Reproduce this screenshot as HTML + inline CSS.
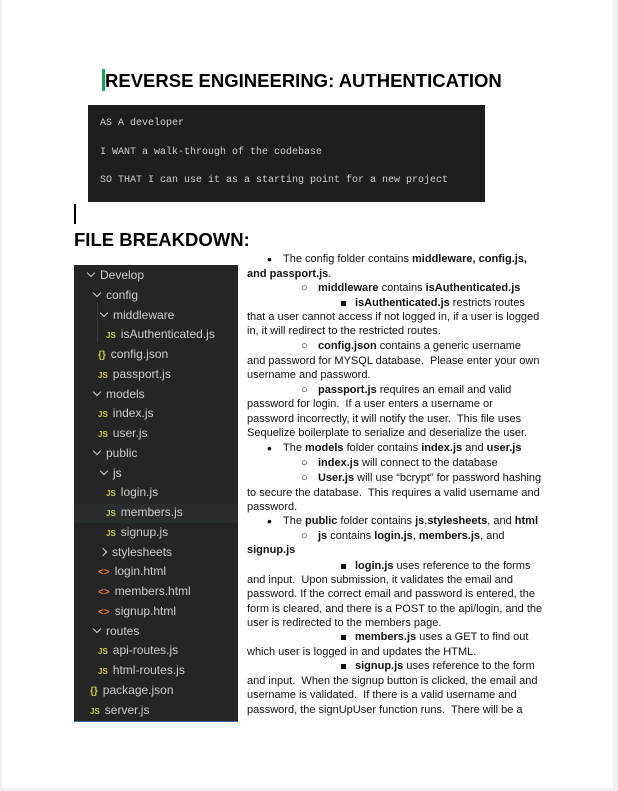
<!DOCTYPE html>
<html><head><meta charset="utf-8"><style>
html,body{margin:0;padding:0;}
body{width:618px;height:791px;background:#eef0f2;position:relative;overflow:hidden;font-family:"Liberation Sans",Arial,sans-serif;}
.page{position:absolute;left:2px;top:0;width:611px;height:788px;background:#fff;}
.a{position:absolute;white-space:nowrap;}
.t{font-size:11px;color:#111;line-height:14px;}
.h{font-size:19px;font-weight:bold;color:#000;}
.code{position:absolute;left:88px;top:105px;width:397px;height:97px;background:#1e1e1e;}
.code div{position:absolute;left:12px;font-family:"Liberation Mono",monospace;font-size:10px;color:#cfcfcf;}
.tree{position:absolute;left:74px;top:265px;width:164px;height:457px;background:#252526;}
.ti{position:absolute;font-size:12px;color:#cccccc;white-space:nowrap;line-height:16px;}
.js{color:#cbcb41;font-weight:bold;font-size:8px;margin-right:5px;}
.br{color:#cbcb41;font-weight:bold;font-size:10px;margin-right:5px;}
.ht{color:#e37933;font-weight:bold;font-size:10px;margin-right:5px;}
.ch{display:inline-block;width:5px;height:5px;border-right:1.2px solid #ccc;border-bottom:1.2px solid #ccc;transform:rotate(45deg);margin:0 6px 3px 1px;}
.cr{display:inline-block;width:5px;height:5px;border-right:1.2px solid #ccc;border-bottom:1.2px solid #ccc;transform:rotate(-45deg);margin:0 6px 1px 0;}
b{font-weight:bold;}
.sq{display:inline-block;width:5px;height:5px;background:#111;}
.bu{font-size:14px;line-height:14px;}
</style></head><body>
<div class="page"></div>
<div class="a" style="left:102px;top:69px;width:3px;height:22px;background:#1a9c5a;"></div>
<div class="a h" style="left:105px;top:70px;font-size:18.5px;">REVERSE ENGINEERING: AUTHENTICATION</div>
<div class="code">
<div style="top:13px">AS A developer</div>
<div style="top:42px">I WANT a walk-through of the codebase</div>
<div style="top:70px">SO THAT I can use it as a starting point for a new project</div>
</div>
<div class="a" style="left:74px;top:204px;width:2px;height:20px;background:#000;"></div>
<div class="a h" style="left:74px;top:229px;font-size:18.5px;">FILE BREAKDOWN:</div>

<div class="tree">
<div style="position:absolute;left:0;top:239px;width:164px;height:19px;background:#2a2d2e;"></div>
<div style="position:absolute;left:23px;top:37px;width:1px;height:40px;background:#3c3c3c;"></div>
<div class="ti" style="left:13px;top:2px"><span class="ch"></span>Develop</div>
<div class="ti" style="left:19px;top:22px"><span class="ch"></span>config</div>
<div class="ti" style="left:26px;top:42px"><span class="ch"></span>middleware</div>
<div class="ti" style="left:32px;top:61px"><span class="js">JS</span>isAuthenticated.js</div>
<div class="ti" style="left:24px;top:81px"><span class="br">{}</span>config.json</div>
<div class="ti" style="left:24px;top:101px"><span class="js">JS</span>passport.js</div>
<div class="ti" style="left:19px;top:121px"><span class="ch"></span>models</div>
<div class="ti" style="left:24px;top:140px"><span class="js">JS</span>index.js</div>
<div class="ti" style="left:24px;top:160px"><span class="js">JS</span>user.js</div>
<div class="ti" style="left:19px;top:180px"><span class="ch"></span>public</div>
<div class="ti" style="left:26px;top:200px"><span class="ch"></span>js</div>
<div class="ti" style="left:32px;top:219px"><span class="js">JS</span>login.js</div>
<div class="ti" style="left:32px;top:239px"><span class="js">JS</span>members.js</div>
<div class="ti" style="left:32px;top:259px"><span class="js">JS</span>signup.js</div>
<div class="ti" style="left:26px;top:279px"><span class="cr"></span>stylesheets</div>
<div class="ti" style="left:24px;top:298px"><span class="ht">&lt;&gt;</span>login.html</div>
<div class="ti" style="left:24px;top:318px"><span class="ht">&lt;&gt;</span>members.html</div>
<div class="ti" style="left:24px;top:338px"><span class="ht">&lt;&gt;</span>signup.html</div>
<div class="ti" style="left:19px;top:358px"><span class="ch"></span>routes</div>
<div class="ti" style="left:24px;top:377px"><span class="js">JS</span>api-routes.js</div>
<div class="ti" style="left:24px;top:397px"><span class="js">JS</span>html-routes.js</div>
<div class="ti" style="left:16px;top:417px"><span class="br">{}</span>package.json</div>
<div class="ti" style="left:16px;top:437px"><span class="js">JS</span>server.js</div>
<div style="position:absolute;left:0;bottom:0;width:164px;height:1px;background:#3b6ea8;"></div>
</div>

<div class="a t bu" style="left:267px;top:252px">•</div>
<div class="a t" style="left:283px;top:252px">The config folder contains <b>middleware, config.js,</b></div>
<div class="a t" style="left:247px;top:267px"><b>and passport.js</b>.</div>
<div class="a t" style="left:301px;top:281px">○</div>
<div class="a t" style="left:318px;top:281px"><b>middleware</b> contains <b>isAuthenticated.js</b></div>
<div class="a t" style="left:341px;top:296px"><span class="sq"></span></div>
<div class="a t" style="left:355px;top:296px"><b>isAuthenticated.js</b> restricts routes</div>
<div class="a t" style="left:247px;top:310px">that a user cannot access if not logged in, if a user is logged</div>
<div class="a t" style="left:247px;top:324px">in, it will redirect to the restricted routes.</div>
<div class="a t" style="left:301px;top:339px">○</div>
<div class="a t" style="left:318px;top:339px"><b>config.json</b> contains a generic username</div>
<div class="a t" style="left:247px;top:354px">and password for MYSQL database.&nbsp; Please enter your own</div>
<div class="a t" style="left:247px;top:368px">username and password.</div>
<div class="a t" style="left:301px;top:383px">○</div>
<div class="a t" style="left:318px;top:383px"><b>passport.js</b> requires an email and valid</div>
<div class="a t" style="left:247px;top:397px">password for login.&nbsp; If a user enters a username or</div>
<div class="a t" style="left:247px;top:412px">password incorrectly, it will notify the user.&nbsp; This file uses</div>
<div class="a t" style="left:247px;top:426px">Sequelize boilerplate to serialize and deserialize the user.</div>
<div class="a t bu" style="left:267px;top:441px">•</div>
<div class="a t" style="left:283px;top:441px">The <b>models</b> folder contains <b>index.js</b> and <b>user.js</b></div>
<div class="a t" style="left:301px;top:456px">○</div>
<div class="a t" style="left:318px;top:456px"><b>index.js</b> will connect to the database</div>
<div class="a t" style="left:301px;top:471px">○</div>
<div class="a t" style="left:318px;top:471px"><b>User.js</b> will use “bcrypt” for password hashing</div>
<div class="a t" style="left:247px;top:486px">to secure the database.&nbsp; This requires a valid username and</div>
<div class="a t" style="left:247px;top:500px">password.</div>
<div class="a t bu" style="left:267px;top:514px">•</div>
<div class="a t" style="left:283px;top:514px">The <b>public</b> folder contains <b>js</b>,<b>stylesheets</b>, and <b>html</b></div>
<div class="a t" style="left:301px;top:529px">○</div>
<div class="a t" style="left:318px;top:529px"><b>js</b> contains <b>login.js</b>, <b>members.js</b>, and</div>
<div class="a t" style="left:247px;top:543px"><b>signup.js</b></div>
<div class="a t" style="left:341px;top:559px"><span class="sq"></span></div>
<div class="a t" style="left:355px;top:559px"><b>login.js</b> uses reference to the forms</div>
<div class="a t" style="left:247px;top:573px">and input.&nbsp; Upon submission, it validates the email and</div>
<div class="a t" style="left:247px;top:587px">password. If the correct email and password is entered, the</div>
<div class="a t" style="left:247px;top:602px">form is cleared, and there is a POST to the api/login, and the</div>
<div class="a t" style="left:247px;top:616px">user is redirected to the members page.</div>
<div class="a t" style="left:341px;top:630px"><span class="sq"></span></div>
<div class="a t" style="left:355px;top:630px"><b>members.js</b> uses a GET to find out</div>
<div class="a t" style="left:247px;top:645px">which user is logged in and updates the HTML.</div>
<div class="a t" style="left:341px;top:659px"><span class="sq"></span></div>
<div class="a t" style="left:355px;top:659px"><b>signup.js</b> uses reference to the form</div>
<div class="a t" style="left:247px;top:674px">and input.&nbsp; When the signup button is clicked, the email and</div>
<div class="a t" style="left:247px;top:688px">username is validated.&nbsp; If there is a valid username and</div>
<div class="a t" style="left:247px;top:703px">password, the signUpUser function runs.&nbsp; There will be a</div>
</body></html>
